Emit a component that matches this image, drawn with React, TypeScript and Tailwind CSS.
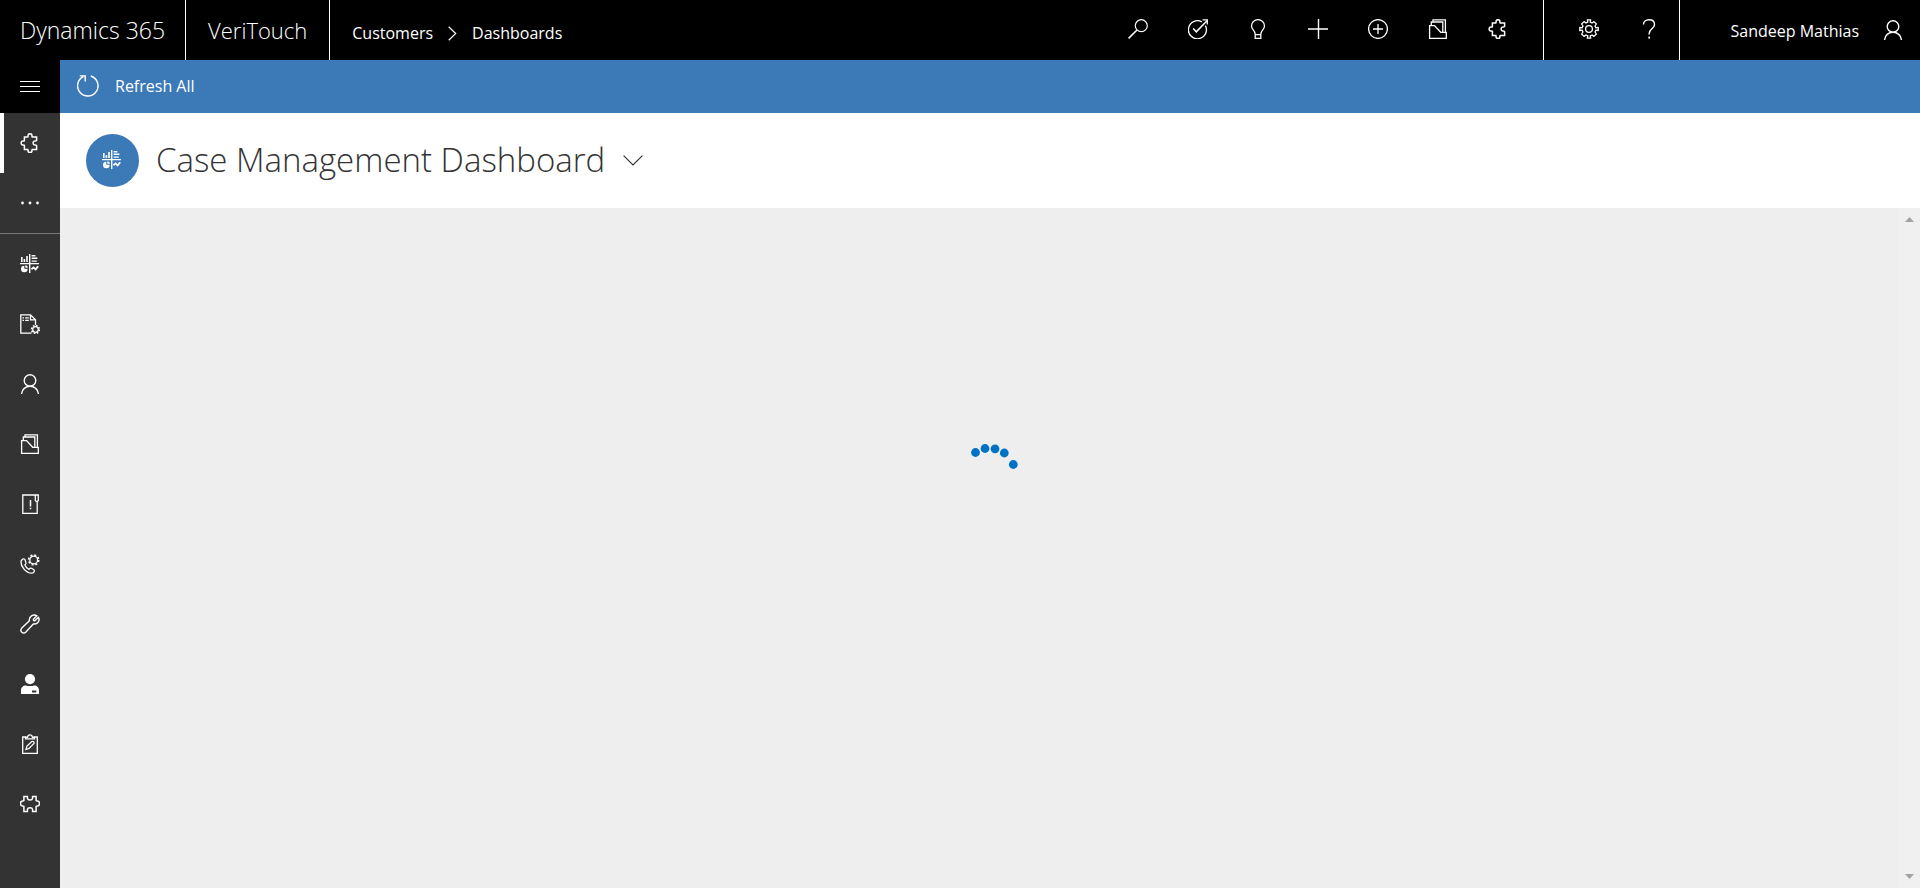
import type { ReactNode } from "react";

function Icon({ children, width = 1.2 }: { children: ReactNode; width?: number }) {
  return (
    <svg
      viewBox="0 0 20 20"
      className="size-5 shrink-0"
      fill="none"
      stroke="currentColor"
      strokeWidth={width}
      aria-hidden="true"
    >
      {children}
    </svg>
  );
}

const Search = () => (
  <Icon>
    <circle cx="13.3" cy="6.7" r="6" />
    <path d="M9 11 .6 19.4" strokeWidth="1.5" />
  </Icon>
);

const Task = () => (
  <Icon width={1.3}>
    <path d="M13.8 2.9A9 9 0 1 0 17.4 6.6" />
    <path d="M5.2 9.6 8.3 12.8 19 1.8" strokeWidth="1.5" />
    <path d="M14.6.9h4.7v4.7" />
  </Icon>
);

const Bulb = () => (
  <Icon width={1.3}>
    <path d="M7.2 15.3c0-4.3-3.7-4.6-3.7-8.4a6.5 6.3 0 0 1 13 0c0 3.8-3.7 4.1-3.7 8.4v4H7.2zM7.2 15.6h5.6" />
  </Icon>
);

const Plus = () => (
  <Icon width={1.4}>
    <path d="M10.5 0v20M0 10h20.5" />
  </Icon>
);

const CirclePlus = () => (
  <Icon width={1.3}>
    <circle cx="10" cy="10" r="9.4" />
    <path d="M10 5v10M5 10h10" />
  </Icon>
);

const Folder = () => (
  <Icon width={1.3}>
    <path d="M1.6 6.6h4.9l6.2 6.7h5.6v6H1.6z" />
    <path d="M3.3 6.4V3h11.5v10M5 3V.8h12.4v12.4" />
  </Icon>
);

const Puzzle = () => (
  <Icon width={1.5}>
    <path d="M4.4 3.9h3.4c.7-.8 0-1.4.4-2.2.6-1.2 3-1.2 3.6 0 .4.8-.3 1.4.4 2.2h4.4v3.6c-.8.7-1.7.3-2.4.6-1.5.7-1.5 3.1 0 3.8.7.3 1.6-.1 2.4.6v4h-4.4c-.7.7 0 1.4-.4 2.1-.6 1.1-3 1.1-3.6 0-.4-.7.3-1.4-.4-2.1H4.4v-4.2c-.7-.7-1.4 0-2.3-.5-1.3-.7-1.3-2.9 0-3.6.9-.5 1.6.2 2.3-.5z" />
  </Icon>
);

const Gear = () => (
  <Icon width={1.3}>
    <path
      strokeLinejoin="round"
      d="M8.3.8 8.8 3.2 7 4 5 2.6 2.6 5 4 7 3.2 8.8.8 8.3v3.4l2.4-.5L4 13l-1.4 2L5 17.4 7 16l1.8.8-.5 2.4h3.4l-.5-2.4L13 16l2 1.4 2.4-2.4L16 13l.8-1.8 2.4.5V8.3l-2.4.5L16 7l1.4-2L15 2.6 13 4l-1.8-.8.5-2.4z"
    />
    <circle cx="10" cy="10" r="3.4" />
  </Icon>
);

const Help = () => (
  <Icon width={1.4}>
    <path d="M4.5 5.6C4.5 2.8 6.8.7 10 .7s5.5 1.8 5.5 4.7c0 4.3-5.3 4.6-5.3 9v1.2" />
    <path d="M10.2 17.6v2" strokeWidth="1.7" />
  </Icon>
);

const Person = () => (
  <Icon width={1.4}>
    <circle cx="10" cy="6.5" r="5.8" />
    <path d="M1.5 20c.4-4.7 4.1-7.7 8.5-7.7s8.1 3 8.5 7.7" />
  </Icon>
);

const Dots = () => (
  <Icon>
    <g fill="currentColor" stroke="none">
      <circle cx="2.5" cy="10" r="1.4" />
      <circle cx="10" cy="10" r="1.4" />
      <circle cx="17.5" cy="10" r="1.4" />
    </g>
  </Icon>
);

const Dashboard = () => (
  <Icon>
    <g fill="currentColor" stroke="none">
      <path d="M0 9h19v1.3H0zM9 0h1.4v19H9zM1 3h1.6v5H1zM3.6 5h1.6v3H3.6zM6.2 2h1.6v6H6.200zM11.6 1h3.8v1.4h-3.8zM11.6 3.6h5.8V5h-5.8zM11.6 6.400h5.200V7.800h-5.200z" />
      <path d="M4.3 11.700v3h3.300a3.300 3.300 0 1 1-3.300-3z" />
      <path d="M5.300 11.200c1.500 0 2.500 1 2.600 2.500H5.300z" />
    </g>
    <path d="m11.400 15.200 2.200-1.800 2 2 2.600-3.200" strokeWidth="1.8" />
  </Icon>
);

const DocumentGear = () => (
  <Icon width={1.3}>
    <path d="M11.500 19.200H.8V.8h9.700l5 5v5.400M10.500.8v5h5" />
    <path d="M2.500 3.800H4m1.200 0h3.600M2.500 6.300H4m1.200 0h3.600" />
    <circle cx="15.500" cy="15.500" r="2.800" />
    <circle cx="15.500" cy="15.500" r="4" strokeDasharray="1.57 1.57" strokeWidth="1.5" />
  </Icon>
);

const Book = () => (
  <Icon width={1.3}>
    <path d="M15.300 1H2.800v18.300h14.400V7.500M15.300 1h3v5.500l-1.400 1.400-1.600-1.400z" />
    <path d="M10.500 6v6.500m0 1.200v1.500" strokeWidth="1.5" />
  </Icon>
);

const PhoneGear = () => (
  <Icon width={1.3}>
    <path d="M2.800 5 1.300 6.500c-1.500 5.200 4.700 12.700 10.500 12.700 1.200 0 2.300-.8 2.500-1.800.2-.9-.2-1.500-.8-1.900l-2-1.200c-.9-.5-1.800.3-2.500 1-1.800-.7-3.400-2.500-4.100-4.300.8-.7 1.500-1.300 1-2.300l-.7-2.500C4.800 5.100 3.800 4.600 2.800 5z" />
    <circle cx="13.700" cy="6" r="3.900" />
    <circle cx="13.700" cy="6" r="5.100" strokeDasharray="2 2" strokeWidth="1.5" />
  </Icon>
);

const Wrench = () => (
  <Icon width={1.4}>
    <path
      strokeLinejoin="round"
      d="M17 1.800 13.400 5.300l.2 1.300 1.300.1 3.600-3.400c1.700 3.200-.7 7.300-5.200 6.700l-7.400 8c-2.800 2.800-6.700-.9-4.100-3.900L9.400 6.700C8.700 2.600 13.200-.4 17 1.800z"
    />
  </Icon>
);

const Contact = () => (
  <Icon>
    <g fill="currentColor" stroke="none">
      <circle cx="10" cy="5.1" r="5.1" />
      <path
        fillRule="evenodd"
        d="M1 20v-3.500c0-3 2-5 5-5l1.500.5h5l1.500-.5c3 0 5 2 5 5V20zm11-3.500v2h4.300v-2z"
      />
    </g>
  </Icon>
);

const Clipboard = () => (
  <Icon width={1.3}>
    <path d="M6.500 3H2.700v16.300h14.600V3h-3.800" />
    <path d="M5.500 4.800V3.300h2c.5-3.300 4.500-3.300 5 0h2v1.500z" />
    <path d="m6 15.500.8-3.200 5-4.800c1.500-.6 2.700.6 2.200 2l-5 4.900z" />
  </Icon>
);

const PuzzleWide = () => (
  <Icon width={1.5}>
    <path d="M3.900 2.500h3.500v1.800c.4 2.300 4.800 2.300 5.200 0V2.500h3.500v4.200c.9.600 1.600-.1 2.500.6 1.200 1 1.200 3.400 0 4.400-.9.700-1.600 0-2.500.6v5.200h-3.500v-2.100c-.4-2.300-4.800-2.300-5.200 0v2.100H3.900v-5.200c-.9-.6-1.600.1-2.500-.6-1.200-1-1.200-3.400 0-4.400.9-.7 1.600 0 2.500-.6z" />
  </Icon>
);

const tools = [
  { label: "Search", icon: <Search /> },
  { label: "Task Flow", icon: <Task /> },
  { label: "Assistant", icon: <Bulb /> },
  { label: "Quick Create", icon: <Plus /> },
  { label: "New", icon: <CirclePlus /> },
  { label: "Cases", icon: <Folder /> },
  { label: "Extensions", icon: <Puzzle /> },
];

const navigation = [
  { label: "Dashboards", icon: <Dashboard /> },
  { label: "Activities", icon: <DocumentGear /> },
  { label: "Customers", icon: <Person /> },
  { label: "Cases", icon: <Folder /> },
  { label: "Knowledge", icon: <Book /> },
  { label: "Call Settings", icon: <PhoneGear /> },
  { label: "Service", icon: <Wrench /> },
  { label: "Contacts", icon: <Contact /> },
  { label: "Surveys", icon: <Clipboard /> },
  { label: "Add-ons", icon: <PuzzleWide /> },
];

function ToolButton({ label, icon }: { label: string; icon: ReactNode }) {
  return (
    <button type="button" aria-label={label} className="flex h-[58px] w-15 items-center justify-center">
      {icon}
    </button>
  );
}

function NavLink({ label, icon, active = false }: { label: string; icon: ReactNode; active?: boolean }) {
  return (
    <a href="#" aria-label={label} className="flex h-15">
      <span className={active ? "w-1 bg-white" : "w-1"} />
      <span className="flex flex-1 items-center justify-center pr-1">{icon}</span>
    </a>
  );
}

function TopBar() {
  return (
    <header className="flex h-15 bg-black text-white">
      <a href="#" className="flex items-center border-r border-white px-5 text-[23px] font-light">
        Dynamics 365
      </a>
      <a href="#" className="flex items-center border-r border-white px-[22px] text-[22px] font-light">
        VeriTouch
      </a>
      <nav aria-label="Breadcrumb" className="flex items-center gap-[15px] pt-1.5 pl-[22px] text-base">
        <a href="#">Customers</a>
        <svg viewBox="0 0 9 15" className="h-[15px] w-[9px]" fill="none" stroke="currentColor" strokeWidth="1.2" aria-hidden="true">
          <path d="m.7.7 7 6.8-7 6.8" />
        </svg>
        <a href="#">Dashboards</a>
      </nav>
      <div className="ml-auto flex pr-[15px]">
        {tools.map((tool) => (
          <ToolButton key={tool.label} {...tool} />
        ))}
      </div>
      <div className="flex border-x border-white pl-[15px]">
        <ToolButton label="Settings" icon={<Gear />} />
        <ToolButton label="Help" icon={<Help />} />
      </div>
      <button type="button" className="flex items-center gap-6 pr-[17px] pl-[50px] text-base">
        <span className="pt-0.5">Sandeep Mathias</span>
        <Person />
      </button>
    </header>
  );
}

function Sidebar() {
  return (
    <aside className="w-15 shrink-0 bg-[#333333] text-white">
      <button type="button" aria-label="Menu" className="flex h-[53px] w-full items-center justify-center bg-black">
        <svg viewBox="0 0 20 11" className="h-[11px] w-5" stroke="currentColor" aria-hidden="true">
          <path d="M0 .5h20M0 5.5h20M0 10.5h20" />
        </svg>
      </button>
      <nav aria-label="Main">
        <div className="border-b border-[#777777]">
          <NavLink label="Extensions" icon={<Puzzle />} active />
          <NavLink label="More" icon={<Dots />} />
        </div>
        {navigation.map((item) => (
          <NavLink key={item.label} {...item} />
        ))}
      </nav>
    </aside>
  );
}

function Spinner() {
  return (
    <svg viewBox="0 0 60 60" className="size-15" fill="#0072c6" role="img" aria-label="Loading">
      <circle cx="15.5" cy="12.5" r="4.4" />
      <circle cx="25" cy="8.5" r="4.4" />
      <circle cx="35" cy="8.8" r="4.4" />
      <circle cx="44.3" cy="13" r="4.4" />
      <circle cx="53.3" cy="24.5" r="4.4" />
    </svg>
  );
}

export default function App() {
  return (
    <div className="flex min-h-screen flex-col bg-white font-['Open_Sans',sans-serif]">
      <TopBar />
      <div className="flex flex-1">
        <Sidebar />
        <main className="flex flex-1 flex-col">
          <div className="flex h-[53px] bg-[#3b79b7] text-white">
            <button type="button" className="flex items-center gap-4 px-[17px] pb-0.5 text-base">
              <svg viewBox="0 0 20 20" className="size-[22px]" fill="none" stroke="currentColor" strokeWidth="1.3" aria-hidden="true">
                <path d="M12.500.9a9.300 9.300 0 1 1-6.700.5M2.500.8h5v5" />
              </svg>
              Refresh All
            </button>
          </div>
          <div className="flex h-[95px] items-center px-[26px]">
            <span className="flex size-[53px] items-center justify-center rounded-full bg-[#3b79b7] pr-px pb-px text-white">
              <Dashboard />
            </span>
            <h1 className="pb-0.5 pl-[17px] text-[33px] font-light text-[#333333]">Case Management Dashboard</h1>
            <button type="button" aria-label="Switch dashboard" className="ml-[18px]">
              <svg viewBox="0 0 20 11" className="h-[11px] w-5" fill="none" stroke="#333333" strokeWidth="1.2" aria-hidden="true">
                <path d="m.6.6 9.4 9.4L19.4.6" />
              </svg>
            </button>
          </div>
          <div className="flex flex-1 bg-[#eeeeee]">
            <div className="flex flex-1 justify-center pt-[232px] pl-[21px]">
              <Spinner />
            </div>
            <div className="flex w-[21px] flex-col items-center justify-between bg-[#f0f0f0] py-[9px]" aria-hidden="true">
              <svg viewBox="0 0 9 5" className="h-[5px] w-[9px]" fill="#a3a3a3">
                <path d="M4.5 0 9 5H0z" />
              </svg>
              <svg viewBox="0 0 9 5" className="h-[5px] w-[9px]" fill="#a3a3a3">
                <path d="M4.5 5 9 0H0z" />
              </svg>
            </div>
          </div>
        </main>
      </div>
    </div>
  );
}
